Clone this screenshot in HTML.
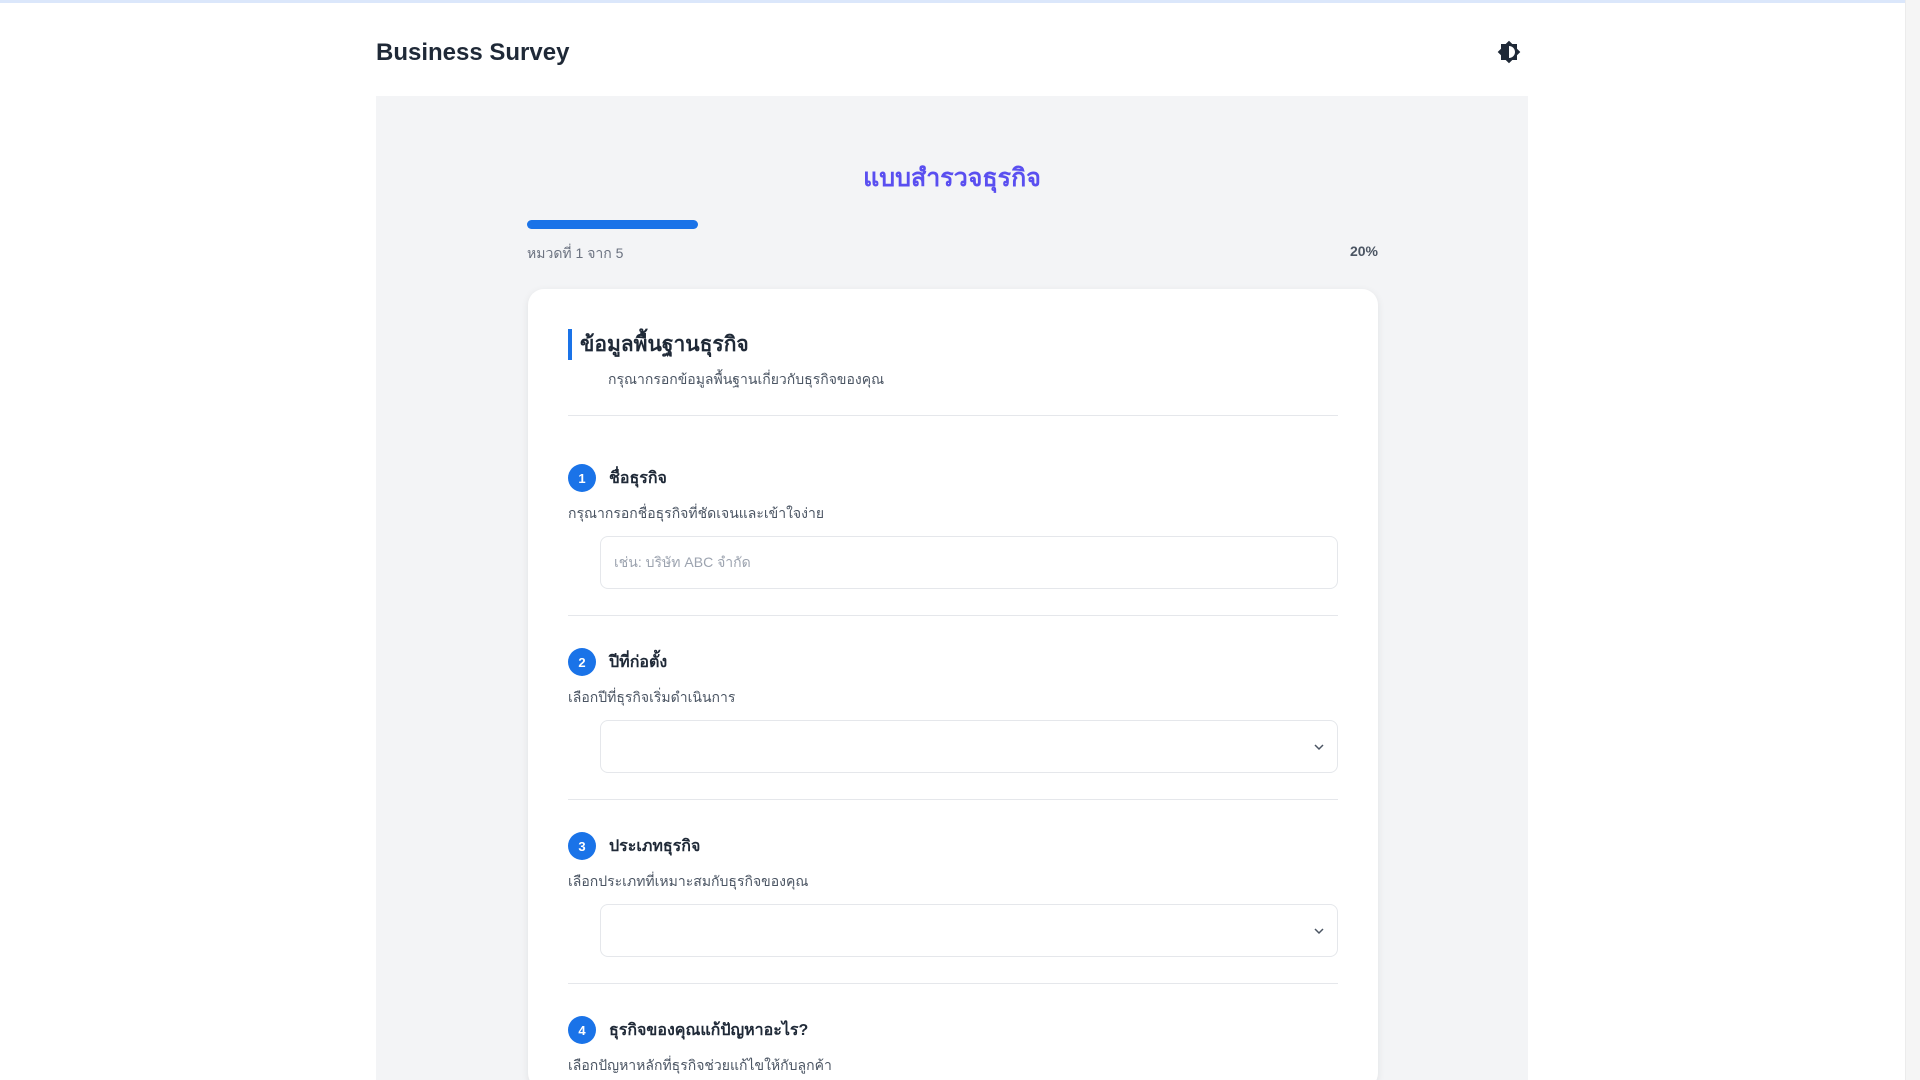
<!DOCTYPE html>
<html><head><meta charset="utf-8"><style>
*{box-sizing:border-box;margin:0;padding:0}
html{width:1920px;height:1080px;overflow:hidden}
body{width:1920px;height:1080px;overflow:hidden;background:#fff;font-family:"Liberation Sans","Noto Sans CJK SC",sans-serif;position:relative}
.topline{position:absolute;left:0;top:0;width:1905px;height:3px;background:#dbe7fb}
.scroll{position:absolute;right:0;top:0;width:15px;height:1080px;background:#f5f5f5;border-left:1px solid #ececec}
.brand{position:absolute;left:376px;top:39px;font-size:24px;font-weight:bold;color:#1f2937}
.theme{position:absolute;left:1497px;top:40px}
.panel{position:absolute;left:376px;top:96px;width:1152px;height:984px;background:#f3f4f6;overflow:hidden}
h1{position:absolute;left:0;width:100%;top:62px;text-align:center;font-size:25px;color:#5a4ff0;font-weight:bold}
.bar{position:absolute;left:151px;top:124px;width:171px;height:9px;border-radius:5px;background:#1a73e8}
.ptext{position:absolute;left:151px;top:147px;font-size:14px;color:#6b7280}
.pct{position:absolute;right:150px;top:147px;font-size:14px;color:#4b5563;font-weight:bold}
.card{position:absolute;left:152px;top:193px;width:850px;height:800px;background:#fff;border-radius:16px;box-shadow:0 2px 8px rgba(0,0,0,.08);padding:0 40px;overflow:hidden}
.sec{margin-top:40px;border-left:4px solid #1a73e8;padding-left:8px;height:31px;font-size:21px;font-weight:bold;color:#1f2937;line-height:31px}
.secsub{margin-left:40px;margin-top:9px;font-size:14px;color:#4b5563;line-height:20px}
.div{margin-top:26px;border-top:1px solid #e5e7eb}
.q{padding-top:32px;padding-bottom:26px;border-bottom:1px solid #e5e7eb}
.q.first{margin-top:16px}
.qh{display:flex;align-items:center;height:28px}
.num{width:28px;height:28px;border-radius:50%;background:#1a73e8;color:#fff;font-size:13px;font-weight:bold;display:flex;align-items:center;justify-content:center}
.qt{margin-left:13px;font-size:16px;font-weight:bold;color:#1f2937}
.qd{margin-top:10px;font-size:14px;color:#4b5563;line-height:22px}
.inp{margin-top:12px;margin-left:32px;height:53px;border:1px solid #e5e7eb;border-radius:8px;font-size:14px;color:#9ca3af;padding:0 13px;line-height:51px;position:relative}
.inp svg{position:absolute;right:12px;top:20px}
</style></head><body>
<div class="topline"></div>
<div class="scroll"></div>
<div class="brand">Business Survey</div>
<svg class="theme" width="24" height="24" viewBox="0 0 24 24"><path fill="#1f2937" d="M20 15.31L23.31 12 20 8.69V4h-4.69L12 .69 8.69 4H4v4.69L.69 12 4 15.31V20h4.69L12 23.31 15.31 20H20v-4.69zM12 18V6c3.31 0 6 2.69 6 6s-2.69 6-6 6z"/></svg>
<div class="panel">
<h1>แบบสำรวจธุรกิจ</h1>
<div class="bar"></div>
<div class="ptext">หมวดที่ 1 จาก 5</div>
<div class="pct">20%</div>
<div class="card">
<div class="sec">ข้อมูลพื้นฐานธุรกิจ</div>
<div class="secsub">กรุณากรอกข้อมูลพื้นฐานเกี่ยวกับธุรกิจของคุณ</div>
<div class="div"></div>
<div class="q first"><div class="qh"><div class="num">1</div><div class="qt">ชื่อธุรกิจ</div></div>
<div class="qd">กรุณากรอกชื่อธุรกิจที่ชัดเจนและเข้าใจง่าย</div>
<div class="inp">เช่น: บริษัท ABC จำกัด</div></div>
<div class="q"><div class="qh"><div class="num">2</div><div class="qt">ปีที่ก่อตั้ง</div></div>
<div class="qd">เลือกปีที่ธุรกิจเริ่มดำเนินการ</div>
<div class="inp"><svg width="12" height="12" viewBox="0 0 12 12"><path d="M2 4l4 4 4-4" fill="none" stroke="#4b5563" stroke-width="1.5"/></svg></div></div>
<div class="q"><div class="qh"><div class="num">3</div><div class="qt">ประเภทธุรกิจ</div></div>
<div class="qd">เลือกประเภทที่เหมาะสมกับธุรกิจของคุณ</div>
<div class="inp"><svg width="12" height="12" viewBox="0 0 12 12"><path d="M2 4l4 4 4-4" fill="none" stroke="#4b5563" stroke-width="1.5"/></svg></div></div>
<div class="q"><div class="qh"><div class="num">4</div><div class="qt">ธุรกิจของคุณแก้ปัญหาอะไร?</div></div>
<div class="qd">เลือกปัญหาหลักที่ธุรกิจช่วยแก้ไขให้กับลูกค้า</div></div>
</div>
</div>
</body></html>
